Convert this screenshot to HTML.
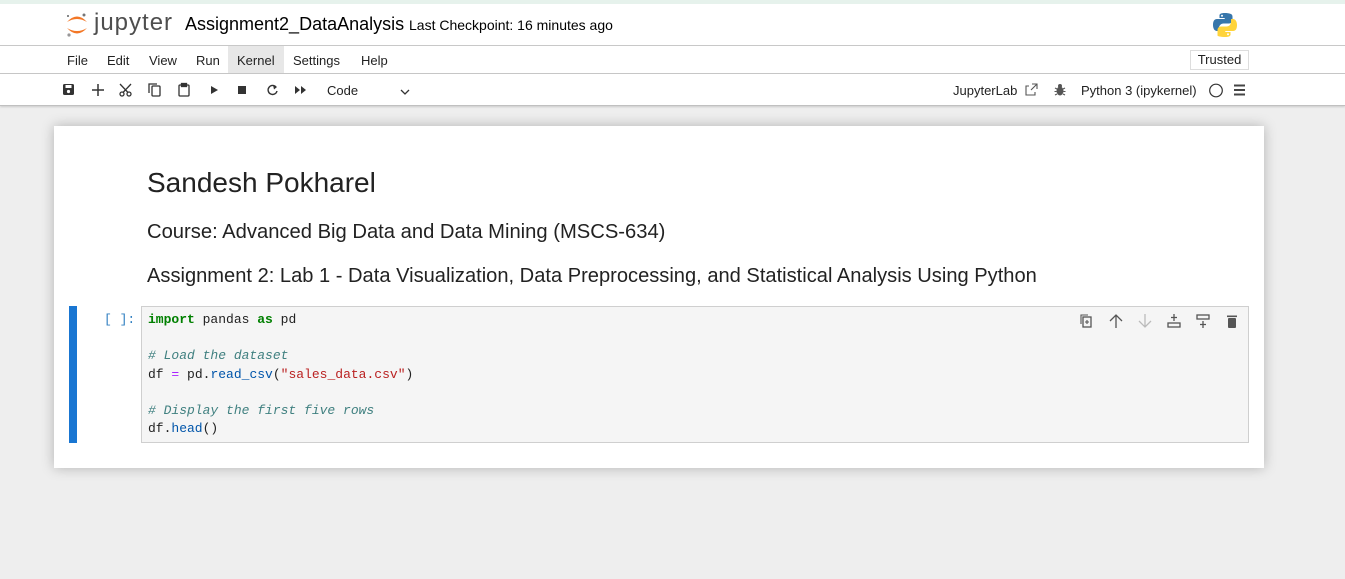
<!DOCTYPE html>
<html><head><meta charset="utf-8"><style>
*{margin:0;padding:0;box-sizing:border-box}
body{width:1345px;height:579px;overflow:hidden;background:#eeeeee;font-family:"Liberation Sans",sans-serif;color:#000;position:relative}
.a{position:absolute;white-space:nowrap}
#hdr{left:0;top:0;width:1345px;height:46px;background:#fff;border-top:4px solid #e6f2ec;border-bottom:1px solid #c8c8c8}
#menu{left:0;top:46px;width:1345px;height:28px;background:#fff;border-bottom:1px solid #c8c8c8}
#tb{left:0;top:74px;width:1345px;height:32px;background:#fff;border-bottom:1px solid #c0c0c0;box-shadow:0 1px 2px rgba(0,0,0,.15)}
.m{font-size:13px;top:7px;color:#222}
#panel{left:54px;top:126px;width:1210px;height:342px;background:#fff;box-shadow:0 0 12px rgba(0,0,0,.25)}
.code{font-family:"Liberation Mono",monospace;font-size:13px;line-height:18.2px;color:#222}
.k{color:#008000;font-weight:bold}.c{color:#408080;font-style:italic}.s{color:#ba2121}.f{color:#0055aa}.o{color:#aa22ff}
</style></head><body>
<div class="a" id="hdr"></div>
<svg class="a" style="left:64px;top:11px" width="26" height="28" viewBox="0 0 26 28">
<path d="M3 11 Q13 0 23 11 Q13 5 3 11Z" fill="#f37726"/><path d="M3 17 Q13 28 23 17 Q13 23 3 17Z" fill="#f37726"/>
<circle cx="20" cy="4" r="1.5" fill="#767677"/><circle cx="5" cy="24" r="1.6" fill="#989798"/><circle cx="4" cy="5" r="1" fill="#616262"/></svg>
<div class="a" style="left:94px;top:9px;font-size:24px;color:#4e4e4e;letter-spacing:1px">jupyter</div>
<div class="a" style="left:185px;top:14px;font-size:18px">Assignment2_DataAnalysis</div>
<div class="a" style="left:409px;top:17px;font-size:14px">Last Checkpoint: 16 minutes ago</div>
<svg class="a" style="left:1212px;top:12px" width="26" height="26" viewBox="0 0 26 26">
<path d="M12.5 1C7 1 7.5 3.5 7.5 3.5V6h5.2v1H5C2 7 1 9.5 1 13s1.5 6 4 6h2v-3c0-2.5 2-4.5 4.5-4.5h5.5c2 0 3.5-1.5 3.5-3.5V4.5C20.5 2 18 1 12.5 1z" fill="#3776ab"/>
<path d="M13.5 25c5.5 0 5-2.5 5-2.5V20h-5.2v-1H21c3 0 4-2.5 4-6s-1.5-6-4-6h-2v3c0 2.5-2 4.5-4.5 4.5H9c-2 0-3.5 1.5-3.5 3.5v5.5C5.5 24 8 25 13.5 25z" fill="#ffd43b"/>
<circle cx="10" cy="3.8" r="1" fill="#fff"/><circle cx="16" cy="22.2" r="1" fill="#fff"/></svg>
<div class="a" id="menu"></div>
<div class="a" style="left:228px;top:46px;width:56px;height:27px;background:#e7e7e7"></div>
<div class="a m" style="left:67px;top:53px">File</div>
<div class="a m" style="left:107px;top:53px">Edit</div>
<div class="a m" style="left:149px;top:53px">View</div>
<div class="a m" style="left:196px;top:53px">Run</div>
<div class="a m" style="left:237px;top:53px">Kernel</div>
<div class="a m" style="left:293px;top:53px">Settings</div>
<div class="a m" style="left:361px;top:53px">Help</div>
<div class="a" style="left:1190px;top:50px;width:59px;height:20px;border:1px solid #ddd;font-size:13px;text-align:center;line-height:18px;color:#222">Trusted</div>
<div class="a" id="tb"></div>
<svg class="a" style="left:60px;top:82px" width="360" height="16" viewBox="0 0 360 16" fill="#333" stroke="#333">
<rect x="3" y="2" width="11" height="11" rx="1.5" stroke="none"/><rect x="5.5" y="3" width="6" height="3" fill="#fff" stroke="none"/><circle cx="8.5" cy="9.5" r="1.6" fill="#fff" stroke="none"/>
<path d="M38 2v12M32 8h12" stroke-width="1.5" fill="none"/>
<g fill="none" stroke-width="1.3"><circle cx="62" cy="12" r="2"/><circle cx="69" cy="12" r="2"/><path d="M63 10.5L71 2M68 10.5L60 2"/></g>
<g fill="none" stroke-width="1.3"><rect x="92" y="4" width="8" height="10" rx="1"/><path d="M89 11V2h8"/></g>
<g fill="none" stroke-width="1.3"><rect x="119" y="3" width="10" height="11" rx="1"/><rect x="121.5" y="1.5" width="5" height="3" fill="#333"/></g>
<path d="M151 4l7 4-7 4z" stroke="none"/>
<rect x="178" y="4" width="8" height="8" stroke="none"/>
<path d="M216 5a4.5 4.5 0 1 0 1 4" fill="none" stroke-width="1.4"/><path d="M213 3l4 2-3 2.5z" stroke="none"/>
<path d="M235 4l5 4-5 4zM241 4l5 4-5 4z" stroke="none"/>
<path d="M341 8l4 4 4-4" fill="none" stroke-width="1.3"/></svg>
<div class="a" style="left:327px;top:83px;font-size:13px;color:#222">Code</div>
<div class="a" style="left:953px;top:83px;font-size:13px;color:#222">JupyterLab</div>
<svg class="a" style="left:1024px;top:82px" width="260" height="16" viewBox="0 0 260 16" fill="none" stroke="#555" stroke-width="1.1">
<path d="M8 2h5v5M13 2L7 8M11 10v3H2V4h3"/>
<g fill="#555" stroke="none"><ellipse cx="36" cy="9" rx="3.5" ry="4.5"/><circle cx="36" cy="4" r="2"/></g><path d="M31 6l2 1M41 6l-2 1M30.5 9.5h2M41.5 9.5h-2M31 13l2-1M41 13l-2-1"/>
<circle cx="192" cy="8.5" r="6.3" stroke="#333" stroke-width="1.2"/>
<path d="M210 3.5h11M210 8h11M210 12.5h11" stroke="#444" stroke-width="2"/></svg>
<div class="a" style="left:1081px;top:83px;font-size:13px;color:#222">Python 3 (ipykernel)</div>
<div class="a" id="panel"></div>
<div class="a" style="left:147px;top:167px;font-size:28px;color:#222">Sandesh Pokharel</div>
<div class="a" style="left:147px;top:221px;font-size:20.2px;color:#222">Course: Advanced Big Data and Data Mining (MSCS-634)</div>
<div class="a" style="left:147px;top:265px;font-size:20.1px;color:#222">Assignment 2: Lab 1 - Data Visualization, Data Preprocessing, and Statistical Analysis Using Python</div>
<div class="a" style="left:69px;top:306px;width:8px;height:137px;background:#1976d2"></div>
<div class="a code" style="left:104px;top:311px;color:#307fc1">[ ]:</div>
<div class="a" style="left:141px;top:306px;width:1108px;height:137px;background:#f5f5f5;border:1px solid #cfcfcf"></div>
<pre class="a code" style="left:148px;top:311px;white-space:pre"><span class="k">import</span> pandas <span class="k">as</span> pd

<span class="c"># Load the dataset</span>
df <span class="o">=</span> pd.<span class="f">read_csv</span>(<span class="s">"sales_data.csv"</span>)

<span class="c"># Display the first five rows</span>
df.<span class="f">head</span>()</pre>
<svg class="a" style="left:1078px;top:312px" width="165" height="18" viewBox="0 0 165 18" fill="none" stroke="#555" stroke-width="1.3">
<rect x="5" y="5" width="8" height="10"/><path d="M3 12V3h7M9 8v4M7 10h4" stroke-width="1.1"/>
<path d="M38 16V3M32 9l6-6 6 6"/>
<path d="M67 2v13M61 9l6 6 6-6" stroke="#bbb"/>
<path d="M96 2v7M93 5.5h6"/><rect x="90" y="11" width="12" height="4"/>
<rect x="119" y="3" width="12" height="4"/><path d="M125 9v7M122 12.5h6"/>
<g fill="#555" stroke="none"><rect x="150" y="6" width="8" height="10" rx="1"/><rect x="149" y="3.5" width="10" height="1.6"/></g></svg>
</body></html>
